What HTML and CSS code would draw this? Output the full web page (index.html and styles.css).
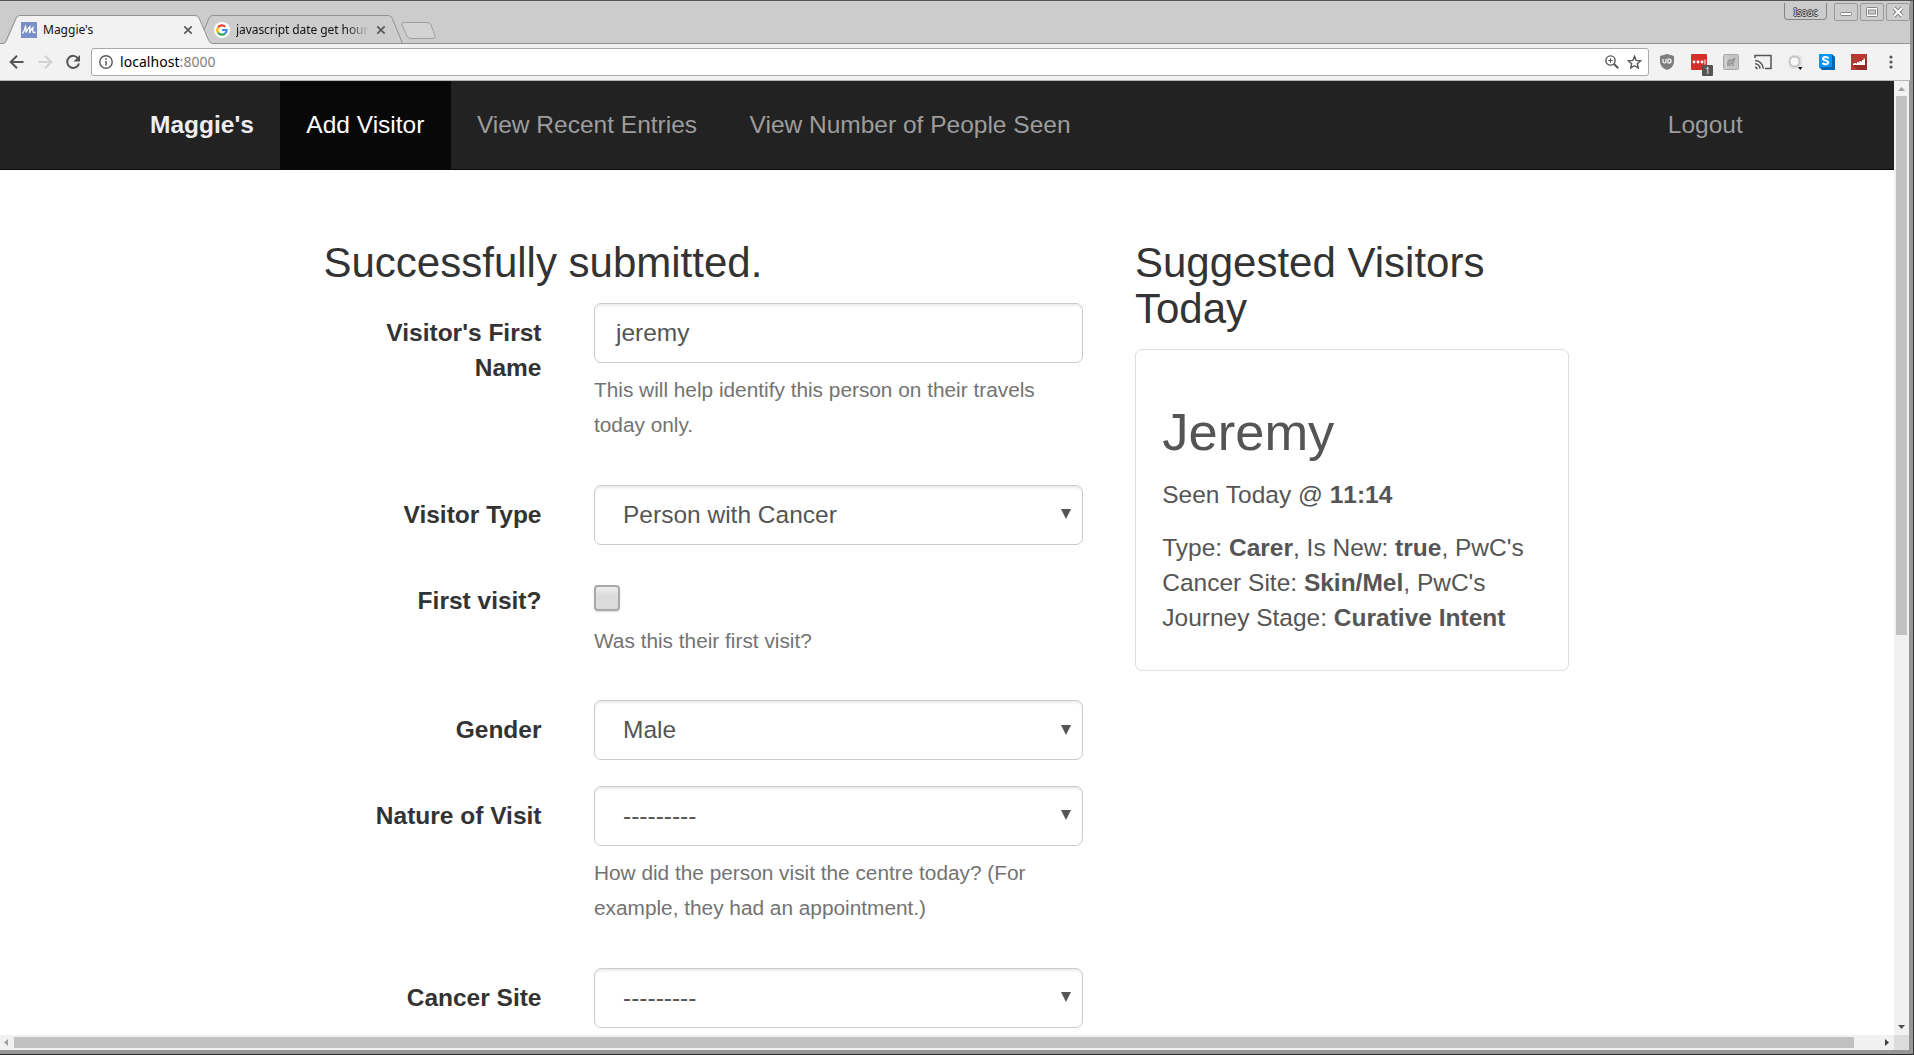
FILE: index.html
```html
<!DOCTYPE html>
<html lang="en">
<head>
<meta charset="utf-8">
<title>Maggie's</title>
<link rel="stylesheet" href="styles.css">
</head>
<body>
<div class="window">
  <header class="tabstrip">
    <svg class="tab-shapes" width="440" height="30" viewBox="0 0 440 30">
      <path d="M204 15l5-12q1-2.500 4-2.500h175q3 0 4 2.500l11 26.500H200z" fill="#cdcdcd" stroke="#929292"/>
      <path d="M0 28.500h3q3 0 4-2.500l10-23q1-2.500 3-2.500h175q3 0 4 2.500l10 23q1 2.500 4 2.500h227V30H0z" fill="#f2f2f2" stroke="none"/>
      <path d="M0 28.500h3q2 0 3-2.500l10-23q1-2.500 4-2.500h175q3 0 4 2.500l10 23q1 2.500 4 2.500h227" fill="none" stroke="#929292"/>
      <path d="M403 7.500h24q3 0 4 2.500l4 11q1 2.500-2 2.500h-22q-3 0-4-2.500l-5-11q-1-2.500 1-2.500z" fill="#d3d3d3" stroke="#a0a0a0"/>
    </svg>
    <div class="tabs">
      <div class="tab tab-active">
        <svg width="16" height="16" viewBox="0 0 16 16"><rect width="16" height="16" fill="#7b8fc7"/><path d="M1.500 11.500Q3.500 9 4.500 4.500q1 2 .5 6Q7 6 9 4.500q0 3-.5 6.500Q10 7 12 5.500q-.5 3 0 4.500 1 1 2.500 0" fill="none" stroke="#fff" stroke-width="1.300"/></svg>
        <span class="tab-title">Maggie's</span>
        <svg class="tab-close" width="10" height="10" viewBox="0 0 10 10"><path d="M1.300 1.300l7.400 7.400M8.700 1.300L1.300 8.700" stroke="#5a5a5a" stroke-width="1.700"/></svg>
      </div>
      <div class="tab tab-search">
        <svg width="16" height="16" viewBox="0 0 16 16"><circle cx="8" cy="8" r="8" fill="#fff"/><g fill="none" stroke-width="2.200"><path d="M4 5.500A4.700 4.700 0 0 1 11.300 4.700" stroke="#ea4335"/><path d="M4 10.500a4.700 4.700 0 0 1 0-5" stroke="#fbbc05"/><path d="M4 10.500A4.700 4.700 0 0 0 11 11.600" stroke="#34a853"/><path d="M8 8h4.700a4.700 4.700 0 0 1-1.700 3.600" stroke="#4285f4"/></g></svg>
        <span class="tab-title fade">javascript date get hour</span>
        <svg class="tab-close" width="10" height="10" viewBox="0 0 10 10"><path d="M1.300 1.300l7.400 7.400M8.700 1.300L1.300 8.700" stroke="#5a5a5a" stroke-width="1.700"/></svg>
      </div>
    </div>
    <div class="controls">
      <span class="user">Isaac</span>
      <span class="control"><svg width="22" height="16" viewBox="0 0 22 16"><rect x="5.500" y="8.500" width="11" height="3" rx="1" fill="#fff" stroke="#858585"/></svg></span>
      <span class="control"><svg width="22" height="16" viewBox="0 0 22 16"><rect x="5.500" y="3.500" width="11" height="9" rx="1" fill="#fff" stroke="#858585"/><rect x="7.500" y="6" width="7" height="4" fill="#ccc" stroke="#858585"/></svg></span>
      <span class="control"><svg width="22" height="16" viewBox="0 0 22 16"><path d="M7 4l8 8M15 4l-8 8" stroke="#858585" stroke-width="4"/><path d="M7 4l8 8M15 4l-8 8" stroke="#fff" stroke-width="2"/></svg></span>
    </div>
  </header>

  <div class="toolbar">
    <svg class="nav-icon" width="16" height="16" viewBox="0 0 16 16"><path d="M14.500 8H2M8 1.700L1.700 8 8 14.300" fill="none" stroke="#555" stroke-width="2"/></svg>
    <svg class="nav-icon" width="16" height="16" viewBox="0 0 16 16"><path d="M1.500 8H14M8 1.700L14.300 8 8 14.300" fill="none" stroke="#d0d0d0" stroke-width="2"/></svg>
    <svg class="nav-icon" width="16" height="16" viewBox="0 0 16 16"><path d="M13.200 4.500A6 6 0 1 0 14 9.500" fill="none" stroke="#555" stroke-width="2"/><path d="M15 1v6.500H8.500z" fill="#555"/></svg>
    <div class="omnibox">
      <svg width="14" height="14" viewBox="0 0 14 14"><circle cx="7" cy="7" r="6.200" fill="none" stroke="#5a5a5a" stroke-width="1.400"/><path d="M7 6v4.500M7 3.300v1.600" stroke="#5a5a5a" stroke-width="1.500"/></svg>
      <span class="url">localhost<span class="port">:8000</span></span>
      <svg class="zoom-icon" width="14" height="14" viewBox="0 0 14 14"><circle cx="5.500" cy="5.500" r="4.600" fill="none" stroke="#555" stroke-width="1.400"/><path d="M9 9l4.300 4.300" stroke="#555" stroke-width="2"/><path d="M3.300 5.500h4.400M5.500 3.300v4.400" stroke="#555"/></svg>
      <svg width="15" height="14" viewBox="0 0 15 14"><path d="M7.500 1.300l1.700 4.100 4.500.4-3.400 2.900 1 4.300-3.800-2.300L3.700 13l1-4.300L1.300 5.800l4.500-.4z" fill="none" stroke="#555" stroke-width="1.400"/></svg>
    </div>
    <div class="extensions">
      <svg width="16" height="16" viewBox="0 0 16 16"><path d="M8 0l7 2v6q0 5-7 8Q1 13 1 8V2z" fill="#7d7d7d"/><path d="M4 5v2.500q0 1.500 1.500 1.500T7 7.500V5M9 5v4h1q2 0 2-2t-2-2z" fill="none" stroke="#fff" stroke-width="1.200"/></svg>
      <span class="ext-badged"><svg width="16" height="16" viewBox="0 0 16 16"><rect width="16" height="16" rx="1" fill="#d32f2b"/><g fill="#fff"><circle cx="3" cy="8" r="1.400"/><circle cx="7" cy="8" r="1.400"/><circle cx="11" cy="8" r="1.400"/><rect x="13.500" y="5.500" width="1" height="5"/></g></svg><span class="badge">1</span></span>
      <svg width="16" height="16" viewBox="0 0 16 16"><rect x=".5" y=".5" width="15" height="15" rx="1" fill="#c4c4c4" stroke="#aaa"/><path d="M3 1v14" stroke="#ddd"/><path d="M5 12V8l2-2 1.500 1L10 5.500 12 4M7 12V9h3v3M10 9l2-5" fill="none" stroke="#929292" stroke-width="1.400"/></svg>
      <svg class="cast" width="18" height="16" viewBox="0 0 18 16"><path d="M1 4V1.500h16v13h-6" fill="none" stroke="#555" stroke-width="1.500"/><path d="M1 13.200a2 2 0 0 1 2 2M1 9.800a5 5 0 0 1 5 5M1 6.500a8.500 8.500 0 0 1 8.300 8.300" fill="none" stroke="#555" stroke-width="1.500"/></svg>
      <svg width="16" height="16" viewBox="0 0 16 16"><rect x="2" y="1" width="13" height="14" rx="4" fill="#e2e2e2"/><circle cx="7.500" cy="7.500" r="5" fill="#f8f8f8" stroke="#c4c4c4" stroke-width="2"/><path d="M11 13h4.500l-2.200 3z" fill="#111"/></svg>
      <svg width="16" height="16" viewBox="0 0 16 16"><path d="M0 0h13l3 3v13H3l-3-3z" fill="#0067b8"/><rect width="13" height="13" fill="#0095ff"/><path d="M9.500 4.500Q9 3 6.500 3T4 4.800Q4 6 6.500 6.500T9.200 8.500Q9 10.300 6.500 10.300T3.700 8.800" fill="none" stroke="#fff" stroke-width="2"/></svg>
      <svg width="16" height="16" viewBox="0 0 16 16"><rect width="16" height="16" fill="#b93632"/><path d="M2 11L14 4l2 2v10H7z" fill="#982b28"/><path d="M2 11V9.500h1.500V9H5v.5h1V8h1.500v.5h1V7h1.500v.5h1V6h1.500V4.500H14V11z" fill="#fff"/></svg>
      <svg class="menu" width="4" height="14" viewBox="0 0 4 14"><g fill="#555"><circle cx="2" cy="2" r="1.600"/><circle cx="2" cy="7" r="1.600"/><circle cx="2" cy="12" r="1.600"/></g></svg>
    </div>
  </div>

  <div class="viewport">
    <div class="page">
      <nav class="navbar">
        <a class="brand">Maggie's</a>
        <a class="nav-link nav-active">Add Visitor</a>
        <a class="nav-link">View Recent Entries</a>
        <a class="nav-link">View Number of People Seen</a>
        <a class="nav-link logout">Logout</a>
      </nav>
      <main class="content">
        <form class="visitor-form">
          <h3>Successfully submitted.</h3>
          <div class="row">
            <label>Visitor's First Name</label>
            <div class="field"><div class="input">jeremy</div><p class="help">This will help identify this person on their travels today only.</p></div>
          </div>
          <div class="row">
            <label>Visitor Type</label>
            <div class="field"><div class="input select">Person with Cancer<i class="arrow"></i></div></div>
          </div>
          <div class="row">
            <label>First visit?</label>
            <div class="field"><div class="check-wrap"><span class="checkbox"></span></div><p class="help">Was this their first visit?</p></div>
          </div>
          <div class="row">
            <label>Gender</label>
            <div class="field"><div class="input select">Male<i class="arrow"></i></div></div>
          </div>
          <div class="row">
            <label>Nature of Visit</label>
            <div class="field"><div class="input select">---------<i class="arrow"></i></div><p class="help">How did the person visit the centre today? (For example, they had an appointment.)</p></div>
          </div>
          <div class="row">
            <label>Cancer Site</label>
            <div class="field"><div class="input select">---------<i class="arrow"></i></div></div>
          </div>
        </form>
        <aside class="suggested">
          <h3>Suggested Visitors Today</h3>
          <article class="card">
            <h2>Jeremy</h2>
            <p>Seen Today @ <b class="time">11:14</b></p>
            <p>Type: <b>Carer</b>, Is New: <b>true</b>, PwC's Cancer Site: <b>Skin/Mel</b>, PwC's Journey Stage: <b>Curative Intent</b></p>
          </article>
        </aside>
      </main>
    </div>
    <div class="vscroll">
      <svg width="15" height="15" viewBox="0 0 15 15"><path d="M4 10h7L7.500 6z" fill="#a0a0a0"/></svg>
      <div class="vthumb"></div>
      <svg class="down" width="15" height="14" viewBox="0 0 15 14"><path d="M4 4h7L7.500 8z" fill="#505050"/></svg>
    </div>
    <div class="hscroll">
      <svg width="14" height="15" viewBox="0 0 14 15"><path d="M8 4v7L4 7.500z" fill="#a0a0a0"/></svg>
      <div class="hthumb"></div>
      <svg class="right" width="14" height="15" viewBox="0 0 14 15"><path d="M5 4v7l4-3.500z" fill="#404040"/></svg>
    </div>
    <div class="corner"></div>
  </div>
</div>
</body>
</html>
```
FILE: styles.css
```css
* { box-sizing: border-box; }
body { margin: 0; background: #333; }
svg { display: block; flex: none; }
.window {
  width: 1914px; height: 1055px; overflow: hidden;
  display: grid; grid-template-rows: 43px 37px 972px;
  border-top: 1px solid #555; border-right: 1px solid #333; border-bottom: 1px solid #2b292c;
  background: #969696;
  font-family: "Noto Sans", sans-serif;
}

/* Tab strip */
.tabstrip { position: relative; display: flex; justify-content: space-between; background: #ccc; border-bottom: 1px solid #929292; margin-right: 3px; }
.tab-shapes { position: absolute; left: 0; top: 14px; }
.tabs { position: relative; display: flex; padding: 14px 0 0 21px; }
.tab { display: flex; align-items: center; height: 29px; font-size: 12px; color: #111; }
.tab-active { width: 193px; }
.tab-search { width: 175px; }
.tab-title { margin-left: 6px; white-space: nowrap; }
.tab-close { margin-left: auto; margin-right: 21px; }
.tab-search .tab-close { margin-right: 3px; }
.fade { width: 134px; letter-spacing: -.07px; overflow: hidden; -webkit-mask-image: linear-gradient(90deg, #000 82%, transparent); mask-image: linear-gradient(90deg, #000 82%, transparent); }
.controls { display: flex; gap: 2px; padding-top: 2px; }
.user { width: 43px; height: 17px; margin-right: 5px; border: 1px solid #858585; border-top: 0; border-radius: 0 0 4px 4px; font-size: 10px; line-height: 18px; text-align: center; color: #d8d8d8; text-shadow: 1px 0 #444, -1px 0 #444, 0 1px #444, 0 -1px #444; }
.control { width: 24px; height: 18px; border: 1px solid #999; border-radius: 2px; }

/* Toolbar */
.toolbar { display: flex; align-items: center; padding-left: 9px; background: #f2f2f2; border-bottom: 1px solid #b6b4b6; margin-right: 3px; }
.nav-icon { margin-right: 12px; }
.omnibox { display: flex; align-items: center; width: 1558px; height: 28px; margin-left: -2px; padding: 0 6px 0 7px; background: #fff; border: 1px solid #a8a8a8; border-radius: 3px; }
.url { margin-left: 7px; margin-top: -1px; font-size: 14px; letter-spacing: .05px; color: #000; }
.port { color: #808080; }
.zoom-icon { margin-left: auto; margin-right: 8px; }
.extensions { display: flex; align-items: center; gap: 16px; margin-left: 10px; }
.ext-badged { position: relative; }
.badge { position: absolute; left: 11px; top: 11px; width: 11px; height: 11px; background: #555; color: #fff; font-size: 8px; line-height: 11px; text-align: center; border-radius: 1px; }
.cast { margin: 0 -1px; }
.menu { margin-left: 6px; }

/* Browser viewport */
.viewport { display: grid; grid-template: 954px 15px / 1894px 15px; width: 1909px; height: 969px; background: #f1f1f1; }
.page { overflow: hidden; background: #fff; font-family: "Liberation Sans", Arial, sans-serif; font-size: 24.5px; line-height: 35px; color: #555; }
.vscroll { display: flex; flex-direction: column; align-items: center; background: #f1f1f1; }
.vthumb { width: 11px; height: 539px; background: #c1c1c1; }
.down { margin-top: auto; }
.hscroll { display: flex; align-items: center; background: #f1f1f1; }
.hthumb { width: 1840px; height: 11px; background: #c1c1c1; }
.right { margin-left: auto; }
.corner { background: #dcdcdc; }

/* Site navigation */
.navbar { display: flex; align-items: center; height: 89px; padding: 0 125px 0 123.750px; background: #222; border-bottom: 1px solid #080808; color: #9d9d9d; }
.navbar a { height: 88px; padding: 0 26.250px; line-height: 87px; white-space: nowrap; }
.navbar .brand { font-weight: 700; color: #eee; }
.navbar .nav-active { background: #080808; color: #fff; }
.logout { margin-left: auto; }

/* Form and suggestions */
.content { display: grid; grid-template-columns: 759px 434px; column-gap: 52.500px; padding: 69.500px 0 0 323.500px; }
h3 { margin: 0 0 17.500px; font-size: 42px; line-height: 46.200px; font-weight: 500; color: #333; }
h2 { margin: 0 0 16.500px; font-size: 52.500px; line-height: 57.750px; font-weight: 500; }
.row { display: grid; grid-template-columns: 218px 489px; column-gap: 52.500px; margin-bottom: 26.250px; }
label { padding-top: 12px; text-align: right; font-weight: 700; color: #333; }
.input { display: flex; align-items: center; height: 59.500px; padding: 0 21px; border: 1px solid #ccc; border-radius: 7px; box-shadow: inset 0 2px 2px rgba(0,0,0,.075); }
.select { justify-content: space-between; padding: 0 11px 1px 28px; }
.arrow { border: 5px solid transparent; border-top: 10px solid #555; border-bottom: 0; }
.help { margin: 9.750px 0 16.500px; font-size: 20.820px; color: #737373; }
.check-wrap { height: 41.800px; padding-top: 14px; }
.checkbox { display: block; width: 26px; height: 26px; border: 2px solid #a9a9a9; border-radius: 4px; background: linear-gradient(#ededed, #dcdcdc 40%); box-shadow: 0 1px 2px rgba(0,0,0,.15); }
.card { height: 321.500px; padding: 52.500px 26.250px 0; border: 1px solid #ddd; border-radius: 7px; }
.card p { margin: 0 0 17.500px; }
.time { font-kerning: none; }
```
